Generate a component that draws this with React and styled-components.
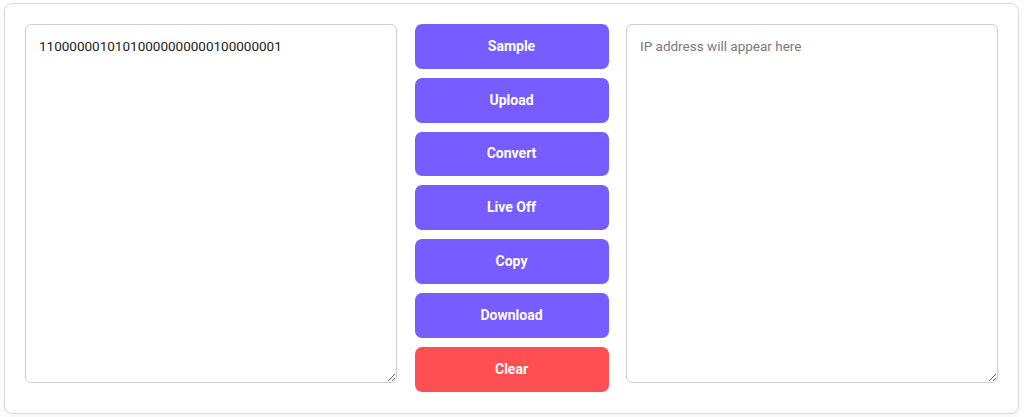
import React, { useState } from 'react';
import styled, { createGlobalStyle } from 'styled-components';

const GlobalStyle = createGlobalStyle`
  html, body {
    margin: 0;
    padding: 0;
    background: #ffffff;
    font-family: Roboto, "Liberation Sans", Arial, sans-serif;
  }
`;

const Page = styled.div`
  padding: 3px 5px 3px 4px;
`;

const Card = styled.div`
  display: grid;
  grid-template-columns: 372px 194px 372px;
  column-gap: 17.5px;
  align-items: start;
  padding: 20px 20px 21px 20px;
  border: 1px solid #dcdcdc;
  border-radius: 8px;
  background: #ffffff;
  box-shadow: 0 2px 6px rgba(0, 0, 0, 0.06);
`;

const TextBox = styled.textarea`
  box-sizing: border-box;
  width: 100%;
  height: 359px;
  margin: 0;
  padding: 11px 13px;
  border: 1px solid #cfcfcf;
  border-radius: 6px;
  font-family: Roboto, "Liberation Sans", Arial, sans-serif;
  font-size: 13.5px;
  line-height: 1.5;
  color: #222222;
  resize: both;
  outline: none;

  &::placeholder {
    color: #7a7a7a;
  }
`;

const ButtonColumn = styled.div`
  display: flex;
  flex-direction: column;
  gap: 9px;
`;

const ActionButton = styled.button`
  height: 44.8px;
  padding: 0 0 1px;
  border: none;
  border-radius: 7px;
  background-color: ${(p) => (p.$danger ? '#ff4f52' : '#775cff')};
  color: #ffffff;
  font-family: Roboto, "Liberation Sans", Arial, sans-serif;
  font-size: 14px;
  font-weight: 700;
  cursor: pointer;
`;

const App = () => {
  const [binary, setBinary] = useState('11000000101010000000000100000001');
  const [ip, setIp] = useState('');

  return (
    <Page>
      <GlobalStyle />
      <Card>
        <TextBox value={binary} onChange={(e) => setBinary(e.target.value)} />
        <ButtonColumn>
          <ActionButton>Sample</ActionButton>
          <ActionButton>Upload</ActionButton>
          <ActionButton>Convert</ActionButton>
          <ActionButton>Live Off</ActionButton>
          <ActionButton>Copy</ActionButton>
          <ActionButton>Download</ActionButton>
          <ActionButton $danger>Clear</ActionButton>
        </ButtonColumn>
        <TextBox
          placeholder="IP address will appear here"
          value={ip}
          onChange={(e) => setIp(e.target.value)}
        />
      </Card>
    </Page>
  );
};

export default App;
